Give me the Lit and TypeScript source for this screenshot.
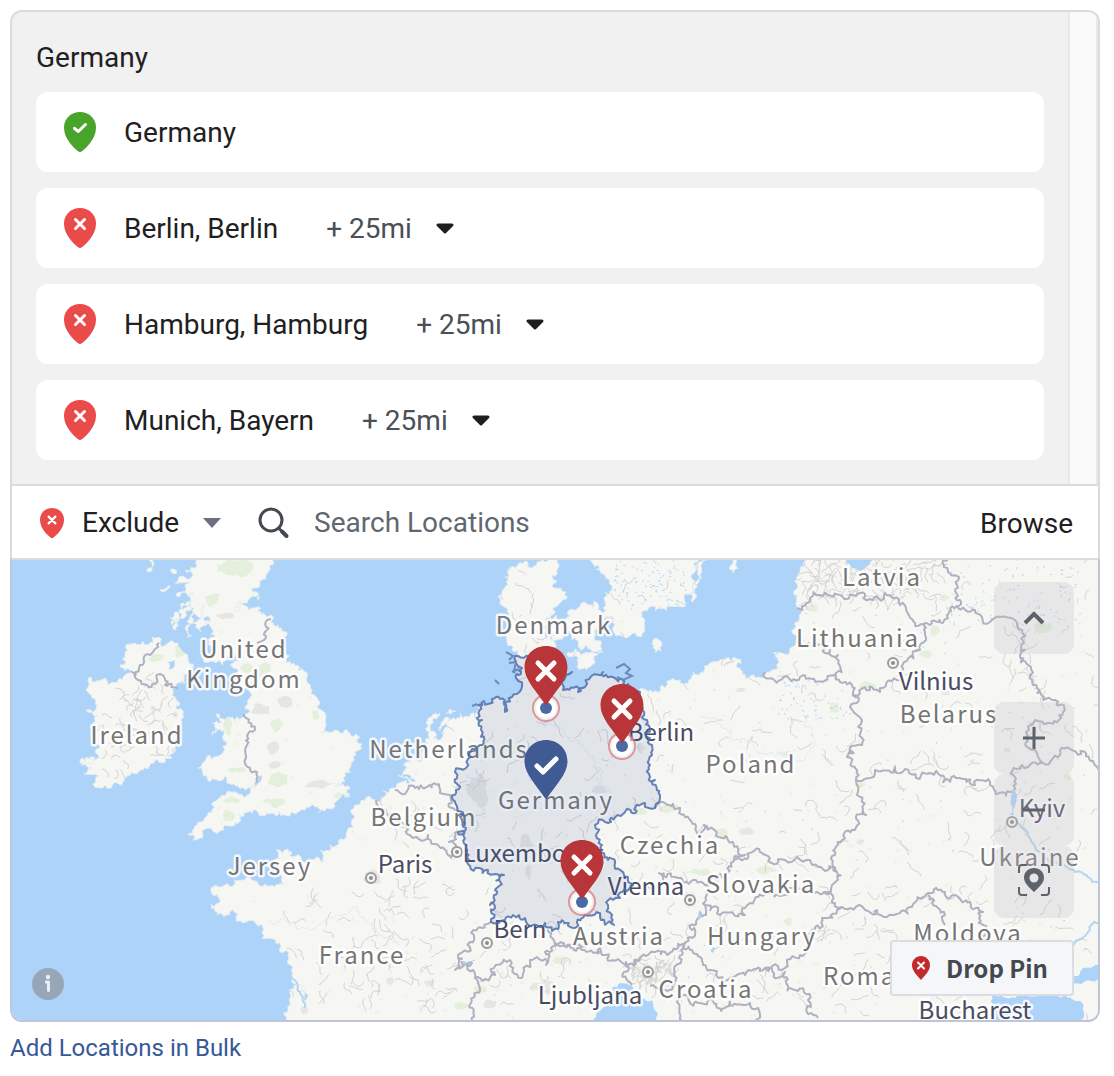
import { LitElement, html, svg, css } from "lit";
import { customElement, property, state } from "lit/decorators.js";

type Point = [number, number];

/* ---------- geometry helpers ---------- */

const parse = (text: string): Point[] =>
  text.trim().split(/\s+/).map((pair) => pair.split(",").map(Number) as Point);

function hash(a: number, b: number, c: number, d: number): number {
  const n = Math.sin(a * 12.9898 + b * 78.233 + c * 37.719 + d * 4.581) * 43758.5453;
  return n - Math.floor(n);
}

/* Breaks a straight edge into a natural looking one. The result depends only
   on the two ends, so neighbours that share an edge share its outline. */
function roughEdge(a: Point, b: Point, amount: number): Point[] {
  const length = Math.hypot(b[0] - a[0], b[1] - a[1]);
  if (length < 4) return [b];
  const h = hash(a[0] + b[0], a[1] + b[1], a[0] * b[0], a[1] * b[1]) - 0.5;
  const sign = a[0] < b[0] || (a[0] === b[0] && a[1] < b[1]) ? 1 : -1;
  const reach = h * amount * sign * Math.min(1, 10 / length);
  const mid: Point = [
    (a[0] + b[0]) / 2 - (b[1] - a[1]) * reach,
    (a[1] + b[1]) / 2 + (b[0] - a[0]) * reach,
  ];
  return [...roughEdge(a, mid, amount), ...roughEdge(mid, b, amount)];
}

function outline(text: string, closed: boolean, amount = 0.5): string {
  const points = parse(text);
  const all: Point[] = [points[0]];
  for (let i = 1; i < points.length; i++) all.push(...roughEdge(points[i - 1], points[i], amount));
  if (closed) all.push(...roughEdge(points[points.length - 1], points[0], amount));
  return "M" + all.map((p) => p[0].toFixed(1) + " " + p[1].toFixed(1)).join("L") + (closed ? "Z" : "");
}

/* ---------- map data ---------- */

const LAND = [
  // Great Britain
  "196,550 200,560 185,570 193,575 175,584 190,582 176,595 193,592 180,605 192,600 184,618 172,625 178,612 170,618 176,630 190,606 193,612 187,638 192,636 197,616 203,604 202,612 196,628 201,632 203,618 208,616 213,630 208,640 212,652 204,662 216,663 228,660 234,656 240,650 238,662 236,674 240,684 250,692 248,704 250,712 242,718 228,717 216,714 222,722 212,735 224,730 227,742 214,757 198,768 207,776 225,776 238,786 248,788 258,780 262,775 256,786 250,794 238,794 222,795 216,801 212,810 200,822 188,834 200,838 208,828 220,831 232,826 238,814 248,812 260,816 272,813 285,815 292,812 305,810 325,811 335,806 349,797 350,789 335,786 343,778 351,763 356,755 357,742 348,732 335,730 322,733 326,725 325,713 318,700 312,690 307,677 298,670 286,662 283,640 278,625 270,615 255,608 234,610 240,606 258,600 252,592 260,584 268,572 272,560 272,550",
  // Ireland
  "152,637 160,643 178,643 184,653 190,664 191,671 184,684 176,688 175,697 178,710 179,730 175,745 170,754 172,758 158,760 140,770 125,779 105,785 93,784 99,776 84,774 92,768 82,765 95,757 80,760 97,754 100,746 93,740 104,726 90,728 98,716 86,710 97,706 86,690 92,678 105,678 108,685 122,680 133,672 120,665 125,655 126,645 148,645",
  // Mainland
  "550,550 545,562 528,563 515,568 505,577 503,590 502,605 506,620 510,634 512,650 518,656 522,668 516,678 521,690 512,697 505,712 500,699 484,701 478,705 477,712 460,713 448,717 441,726 441,735 434,740 433,731 428,734 425,750 416,760 405,770 398,775 410,783 395,788 375,800 355,805 354,828 346,838 330,844 320,850 323,862 308,862 296,856 288,849 276,850 281,866 284,884 268,886 258,884 250,878 240,880 225,885 211,890 219,898 211,904 222,914 236,917 246,922 258,926 268,938 280,952 290,965 292,975 300,990 303,1000 294,985 290,1005 289,1040 1160,1040 1160,540 805,540 804,562 797,577 797,608 798,636 790,652 773,653 778,660 770,672 758,677 742,674 737,659 725,659 710,663 693,672 680,680 662,685 648,695 640,692 628,684 615,678 603,672 585,687 578,692 563,690 572,672 560,668 552,650 552,630 550,616 558,605 566,592 554,588 552,575 557,560 558,550",
  // Sweden, Danish islands, Öland, Gotland, Bornholm and small isles
  "596,550 598,565 606,578 612,590 604,598 603,608 611,622 616,636 630,636 642,634 645,620 641,612 652,606 670,606 682,607 684,598 692,586 697,562 698,550",
  "568,611 580,606 590,605 602,612 604,625 596,634 601,644 596,652 584,648 572,640 566,628",
  "546,618 556,615 565,624 563,636 550,636 545,628",
  "568,652 580,655 592,652 603,652 594,660 590,667 578,662 569,657",
  "704,554 707,560 700,574 692,602 690,594 698,570",
  "731,550 736,562 733,573 731,565",
  "653,640 662,645 661,651 653,648",
  "149,560 153,561 152,567 148,572",
  "171,569 176,570 174,574 171,572",
  "160,590 170,585 168,589 162,592",
  "430,732 426,723 432,716 440,713 434,718 430,726",
  "446,714 456,711 450,714",
  "410,780 402,776 406,774 416,781",
];

const WATER = [
  "845,550 846,562 852,569 860,571 868,566 873,560 873,550",
  "593,1030 597,1012 608,1004 618,998 612,988 620,983 632,986 630,996 635,1008 642,998 652,1000 657,1012 661,1030",
  "993,1030 992,996 1015,998 1040,995 1064,996 1080,1001 1083,1010 1079,1030",
  "1070,976 1080,974 1094,966 1104,970 1104,978 1084,982 1070,983",
  "436,733 442,726 449,718 447,726 443,736 437,740",
  "168,662 175,660 173,668 169,670",
  "462,962 474,959 475,961 464,965",
  "710,950 724,944 726,946 712,953",
  "698,918 701,910 702,916 699,920",
  "1011,790 1014,790 1014,815 1010,815",
];

const BORDERS = [
  "271,619 265,632 257,643",
  "243,714 255,730 247,736 247,745 246,758 250,768 257,772 257,782",
  "159,643 150,655 140,665 132,672 138,680 147,685 155,684 160,674 165,685 178,688",
  "395,790 405,794 415,788 427,787 440,789 450,795 455,810 463,815",
  "376,800 386,810 402,823 413,838 425,840 428,835 435,844 448,855 466,848",
  "458,832 449,842 455,848",
  "491,922 478,928 470,942 458,955 455,970 472,963 475,978 480,990 471,1003 478,1030",
  "475,978 495,975 510,960 522,978 530,960 546,965 545,952 558,945 575,944 590,940",
  "545,923 552,938 570,945 600,948 602,955 640,960 665,952 683,948 692,938 690,928 698,918 706,915 706,900 703,883",
  "633,885 660,885 659,873 675,877 693,880 703,883 705,885 728,873 734,860",
  "655,808 665,803 680,808 690,820 700,835 704,825 722,838 733,842 745,855 734,860 762,853 772,863 785,860 810,860 828,870 837,872",
  "706,905 720,915 745,915 750,903 780,896 790,888 810,892 824,892 832,885",
  "688,946 710,970 730,978 745,975 765,968 785,968 800,955 815,930 822,918 842,907",
  "640,960 626,962 624,972 632,985",
  "688,948 674,970 672,985 660,990 650,986",
  "765,968 785,972 795,990 808,1000 808,1014 818,1018",
  "680,1030 677,1002 700,1003 750,1003 758,1008 752,1030",
  "853,692 857,715 862,738 847,757 857,770 856,780 857,795 866,815 855,830 835,855 837,872 832,885 824,892 842,907 865,910 887,917 912,907 928,893 945,892 970,902 983,912 983,925 990,945",
  "928,895 938,908 945,925",
  "765,672 800,677 836,676 838,655 830,650 805,645",
  "836,676 852,685 853,692 880,692 897,680 904,662 920,650 926,640 923,624",
  "797,608 810,598 850,595 870,599 885,593 900,605 923,624 948,618 957,606 960,600 957,585 948,572 950,550",
  "957,606 975,610 990,622 1000,617 1015,620 1022,630 1020,655 1028,665 1033,685 1043,700 1055,700 1063,712 1050,723 1035,720 1029,730 1035,750 1043,763 1060,755 1085,752 1095,765 1104,790",
  "856,780 875,770 895,767 930,773 950,782 975,785 990,785 1012,792 1013,775 1022,765 1043,763",
];

const RIVERS = [
  "1012,820 1030,838 1036,850 1060,865 1075,872 1104,882",
  "1070,950 1090,930 1094,922 1104,926",
  "290,965 300,992 304,1008",
];

const STREAMS = [
  "700,715 730,735 780,752 800,760 815,740 806,720",
  "466,774 478,790 486,820",
  "270,920 310,930 360,912 400,945",
  "546,706 575,740 600,775 612,800",
];

const GERMANY =
  "478,705 482,720 480,745 470,757 455,772 458,785 453,800 463,815 465,823 458,832 466,848 470,866 488,870 504,875 495,890 490,905 491,922 505,920 513,915 525,918 545,923 552,931 558,922 570,927 600,917 614,925 612,915 608,905 620,898 633,885 628,877 608,860 602,845 596,835 595,825 605,822 625,812 645,803 655,808 660,795 655,780 650,765 652,745 645,733 647,720 642,704 640,692 628,684 615,678 603,672 585,687 578,692 563,690 572,672 548,664 530,657 518,656 522,668 516,678 521,690 512,697 505,712 500,699 484,701";

const ISLES =
  "M506 652L513 656L509 660M509 663L516 662L514 671L519 669M512 671L515 673M616 668L624 664L630 669L626 673L632 676L623 680L617 677M495 680L499 684M472 706L477 704";

const PARKS: [number, number, number, number][] = [
  [238, 568, 20, 11], [212, 600, 9, 8], [157, 658, 8, 5], [180, 650, 5, 7], [228, 725, 5, 12], [238, 770, 10, 3],
  [247, 668, 7, 6], [277, 725, 6, 9], [265, 672, 6, 10], [278, 780, 12, 7], [228, 816, 6, 6], [315, 715, 4, 6],
  [342, 796, 10, 4], [232, 800, 10, 3], [275, 802, 12, 5], [670, 808, 12, 4], [640, 812, 6, 4], [785, 754, 9, 4],
  [925, 654, 8, 5], [935, 630, 6, 5], [1043, 628, 9, 7], [868, 686, 9, 4], [834, 708, 6, 6], [944, 598, 5, 4],
  [480, 989, 8, 4], [462, 1006, 8, 4], [560, 960, 9, 4], [700, 872, 14, 4], [765, 870, 12, 4], [788, 922, 5, 4],
  [1068, 776, 5, 4], [860, 785, 6, 3], [812, 608, 7, 4], [505, 580, 3, 6], [636, 968, 6, 3], [722, 832, 6, 5],
];

const TOWNS: [number, number, number, number][] = [
  [225, 616, 10, 3], [260, 710, 11, 6], [285, 702, 8, 6], [273, 748, 6, 7], [318, 784, 16, 5], [275, 765, 7, 4],
  [372, 878, 11, 8], [430, 983, 6, 4], [304, 1010, 4, 4], [390, 981, 4, 4], [478, 790, 12, 16], [526, 845, 8, 11],
  [545, 987, 14, 7], [600, 790, 9, 5], [746, 832, 10, 5], [528, 872, 4, 8], [490, 1004, 8, 5], [610, 620, 6, 5],
  [945, 693, 5, 3], [1007, 750, 4, 3], [860, 842, 5, 3], [640, 748, 5, 5], [175, 715, 3, 4], [740, 690, 5, 3],
];

interface Place { name: string; x: number; y: number; city?: boolean }

const PLACES: Place[] = [
  { name: "Latvia", x: 882, y: 586 },
  { name: "Denmark", x: 554, y: 634 },
  { name: "United", x: 244, y: 658 },
  { name: "Kingdom", x: 244, y: 688 },
  { name: "Lithuania", x: 858, y: 647 },
  { name: "Vilnius", x: 936, y: 690, city: true },
  { name: "Belarus", x: 949, y: 723 },
  { name: "Ireland", x: 137, y: 744 },
  { name: "Berlin", x: 661, y: 741, city: true },
  { name: "Netherlands", x: 449, y: 758 },
  { name: "Poland", x: 751, y: 773 },
  { name: "Germany", x: 556, y: 809 },
  { name: "Kyiv", x: 1042, y: 817, city: true },
  { name: "Belgium", x: 424, y: 826 },
  { name: "Czechia", x: 670, y: 854 },
  { name: "Luxembourg", x: 533, y: 862, city: true },
  { name: "Ukraine", x: 1030, y: 866 },
  { name: "Paris", x: 405, y: 873, city: true },
  { name: "Jersey", x: 270, y: 875 },
  { name: "Vienna", x: 646, y: 895, city: true },
  { name: "Slovakia", x: 761, y: 893 },
  { name: "Bern", x: 520, y: 938, city: true },
  { name: "Austria", x: 619, y: 945 },
  { name: "Hungary", x: 762, y: 945 },
  { name: "Moldova", x: 968, y: 942 },
  { name: "France", x: 362, y: 964 },
  { name: "Romania", x: 880, y: 985 },
  { name: "Croatia", x: 706, y: 998 },
  { name: "Ljubljana", x: 590, y: 1004, city: true },
  { name: "Bucharest", x: 975, y: 1019, city: true },
];

const CAPITALS: Point[] = [[893, 663], [1012, 822], [457, 852], [371, 878], [690, 900], [487, 943], [648, 972]];

/* Short grey strokes of regional lines, and specks of lakes and villages. */
function scatter(): { lines: string; lakes: string; specks: string } {
  let seed = 7;
  const rnd = () => {
    seed = (seed * 16807) % 2147483647;
    return seed / 2147483647;
  };
  const stroke = (x: number, y: number, steps: number, stride: number) => {
    let angle = rnd() * Math.PI * 2;
    let d = `M${x.toFixed(1)} ${y.toFixed(1)}`;
    for (let i = 0; i < steps; i++) {
      angle += (rnd() - 0.5) * 2;
      d += `l${(Math.cos(angle) * stride).toFixed(1)} ${(Math.sin(angle) * stride).toFixed(1)}`;
    }
    return d;
  };
  let lines = "";
  let lakes = "";
  let specks = "";
  for (let i = 0; i < 460; i++) {
    const x = 380 + rnd() * 720;
    const y = 560 + rnd() * 460;
    lines += stroke(x, y, 3 + Math.floor(rnd() * 5), 3);
  }
  for (let i = 0; i < 60; i++) lines += stroke(100 + rnd() * 75, 680 + rnd() * 90, 4, 3);
  for (let i = 0; i < 60; i++) lines += stroke(270 + rnd() * 180, 880 + rnd() * 140, 5, 3);
  for (let i = 0; i < 110; i++) lines += stroke(800 + rnd() * 145, 560 + rnd() * 40, 5, 3);
  for (let i = 0; i < 50; i++) lines += stroke(630 + rnd() * 42, 958 + rnd() * 28, 4, 3);
  for (let i = 0; i < 100; i++) lakes += stroke(612 + rnd() * 75, 560 + rnd() * 48, 2, 1);
  for (let i = 0; i < 100; i++) lakes += stroke(950 + rnd() * 130, 565 + rnd() * 60, 2, 1);
  for (let i = 0; i < 60; i++) lakes += stroke(780 + rnd() * 70, 680 + rnd() * 40, 2, 1);
  for (let i = 0; i < 160; i++) lakes += stroke(480 + rnd() * 610, 600 + rnd() * 410, 2, 1);
  for (let i = 0; i < 400; i++) specks += stroke(200 + rnd() * 890, 620 + rnd() * 400, 2, 2);
  return { lines, lakes, specks };
}

const DETAIL = scatter();
const LAND_PATH = LAND.map((s) => outline(s, true, 1)).join("");
const WATER_PATH = WATER.map((s) => outline(s, true)).join("");
const BORDER_PATH = BORDERS.map((s) => outline(s, false, 1)).join("");
const RIVER_PATH = RIVERS.map((s) => outline(s, false)).join("");
const STREAM_PATH = STREAMS.map((s) => outline(s, false, 1)).join("");
const GERMANY_PATH = outline(GERMANY, true, 1);

function blob([x, y, rx, ry]: [number, number, number, number]): string {
  const pts: string[] = [];
  for (let i = 0; i < 9; i++) {
    const a = (i / 9) * Math.PI * 2;
    const r = 0.65 + hash(x, y, i, 3) * 0.5;
    pts.push(`${Math.round(x + Math.cos(a) * rx * r)},${Math.round(y + Math.sin(a) * ry * r)}`);
  }
  return outline(pts.join(" "), true);
}

const PARK_PATH = PARKS.map(blob).join("");
const TOWN_PATH = TOWNS.map(blob).join("");

/* ---------- icons ---------- */

@customElement("location-pin")
export class LocationPin extends LitElement {
  @property() kind: "include" | "exclude" = "exclude";
  static styles = css`
    :host { display: block; flex: none; width: 32px; height: 40px; }
    .icon { display: block; width: 100%; height: 100%; }
    .include { fill: #49a42c; }
    .exclude { fill: #e94b48; }
    .mark { fill: none; stroke: #fff; stroke-width: 3; stroke-linecap: round; stroke-linejoin: round; }
  `;
  render() {
    return html`<svg class="icon" viewBox="0 0 32 40" aria-hidden="true">
      <path class=${this.kind} d="M16 0C7 0 0 6.500 0 15.500C0 25 7 33.500 14 39.200Q16 40.800 18 39.200C25 33.500 32 25 32 15.500C32 6.500 25 0 16 0Z" />
      ${this.kind === "include"
        ? svg`<path class="mark" d="M10.500 16.300L14.300 19.500L21.500 12.500" />`
        : svg`<path class="mark" d="M11.500 11.500L20.500 20.500M20.500 11.500L11.500 20.500" />`}
    </svg>`;
  }
}

/* ---------- map ---------- */

@customElement("location-map")
export class LocationMap extends LitElement {
  static styles = css`
    :host { display: block; position: relative; overflow: hidden; border: 2px solid #bec5d6; border-top-color: #dadbe1; border-radius: 0 0 12px 12px; }
    .map { display: block; width: 100%; height: 460px; }
    .sea { fill: #add3f8; }
    .land { fill: #f6f7f3; stroke: #e4ecef; stroke-width: 1; }
    .park { fill: #e4efdc; }
    .town { fill: #e7e6e3; }
    .speck { fill: none; stroke: #efefec; stroke-width: 2; }
    .line { fill: none; stroke: #d3d3d3; stroke-width: 1; }
    .lake { fill: none; stroke: #add3f8; stroke-width: 1; }
    .river { fill: none; stroke: #b5d5f2; stroke-width: 2; }
    .stream { fill: none; stroke: #dfebf3; stroke-width: 1; }
    .border { fill: none; stroke: #b0b0c0; stroke-width: 2; stroke-linejoin: round; }
    .label { font-family: "Noto Sans CJK JP", "Noto Sans", sans-serif; font-size: 24px; text-anchor: middle; paint-order: stroke; stroke: #fff; stroke-opacity: 0.85; stroke-width: 5; stroke-linejoin: round; }
    .country { fill: #757575; letter-spacing: 2px; }
    .city { fill: #4a4c60; }
    .capital { fill: #f6f7f3; stroke: #9b9b9b; stroke-width: 2; }
    .capital-dot { fill: #8d8d8d; }
    .region { fill: #3b5998; fill-opacity: 0.11; stroke: #4f6dab; stroke-opacity: 0.85; stroke-width: 2; stroke-linejoin: round; }
    .isles { fill: none; stroke: #6c88bd; stroke-width: 2; }
    .halo { fill: #fff; fill-opacity: 0.5; stroke: #d9696b; stroke-opacity: 0.65; stroke-width: 2; }
    .ring { fill: #fff; }
    .dot { fill: #4a69a5; }
    .marker { fill: #b83639; }
    .marker.chosen { fill: #405a94; }
    .mark { fill: none; stroke: #fff; stroke-width: 5; stroke-linecap: round; stroke-linejoin: round; }
    .controls { position: absolute; right: 24px; top: 22px; bottom: 24px; display: flex; flex-direction: column; align-items: flex-end; }
    button { font-family: "Noto Sans CJK JP", "Noto Sans", sans-serif; border: 0; cursor: pointer; padding: 0; }
    .tool { display: grid; place-items: center; width: 80px; height: 72px; border-radius: 10px; background: rgba(190, 190, 195, 0.27); }
    .tool:first-child { margin-bottom: 48px; }
    .glyph { width: 36px; height: 36px; fill: none; stroke: #5d636d; stroke-width: 3; }
    .solid { fill: #5d636d; stroke: none; }
    .thick { stroke-width: 4; }
    .drop { display: flex; align-items: center; gap: 16px; height: 56px; margin-top: auto; padding: 0 24px 0 20px; border: 2px solid #dadde1; border-radius: 4px; background: #f5f6f8; color: #444950; font-size: 24px; font-weight: 700; line-height: 32px; }
    .drop-icon { width: 18px; height: 24px; }
    .drop-pin { fill: #c22a2d; }
    .drop-mark { fill: none; stroke: #fff; stroke-width: 2; stroke-linecap: round; }
    .info { position: absolute; left: 20px; bottom: 20px; width: 32px; height: 32px; border-radius: 50%; background: #98a7b8; }
    .info-icon { display: block; width: 32px; height: 32px; fill: #e6f1fc; }
  `;

  private pin(x: number, y: number, chosen = false) {
    return svg`<g transform="translate(${x} ${y})">
      <path class="marker ${chosen ? "chosen" : ""}" d="M0 0C-12 0 -21.500 9 -21.500 21.500C-21.500 34 -9 46 -1.500 57.500Q0 59.500 1.500 57.500C9 46 21.500 34 21.500 21.500C21.500 9 12 0 0 0Z" />
      <path class="mark" d=${chosen ? "M-9 26L-3 32L10 19" : "M-8 17L8 33M8 17L-8 33"} />
    </g>`;
  }

  private target(x: number, y: number) {
    return svg`<circle class="halo" cx=${x} cy=${y} r="13" /><circle class="ring" cx=${x} cy=${y} r="10" /><circle class="dot" cx=${x} cy=${y} r="6" />`;
  }

  render() {
    return html`
      <svg class="map" viewBox="12 560 1086 460" preserveAspectRatio="xMidYMid slice" role="img" aria-label="Map of targeted locations">
        <defs><clipPath id="land"><path d=${LAND_PATH} /></clipPath></defs>
        <rect class="sea" x="0" y="540" width="1120" height="500" />
        <path class="land" d=${LAND_PATH} />
        <g clip-path="url(#land)">
          <path class="speck" d=${DETAIL.specks} />
          <path class="town" d=${TOWN_PATH} />
          <path class="park" d=${PARK_PATH} />
          <path class="line" d=${DETAIL.lines} />
          <path class="lake" d=${DETAIL.lakes} />
          <path class="stream" d=${STREAM_PATH} />
          <path class="river" d=${RIVER_PATH} />
        </g>
        <path class="border" d=${BORDER_PATH} />
        <path class="sea" d=${WATER_PATH} />
        ${CAPITALS.map(([x, y]) => svg`<circle class="capital" cx=${x} cy=${y} r="5" /><circle class="capital-dot" cx=${x} cy=${y} r="2" />`)}
        ${PLACES.map((p) => svg`<text class="label ${p.city ? "city" : "country"}" x=${p.x} y=${p.y}>${p.name}</text>`)}
        <path class="region" d=${GERMANY_PATH} />
        <path class="isles" d=${ISLES} />
        ${this.target(546, 708)} ${this.target(622, 746)} ${this.target(582, 902)}
        ${this.pin(546, 646)} ${this.pin(622, 684)} ${this.pin(546, 740, true)} ${this.pin(582, 840)}
      </svg>
      <div class="controls">
        <button class="tool" aria-label="Collapse map">
          <svg class="glyph thick" viewBox="0 0 36 36"><path d="M9 23L18 14L27 23" /></svg>
        </button>
        <button class="tool" aria-label="Zoom in">
          <svg class="glyph" viewBox="0 0 36 36"><path d="M7 18H29M18 7V29" /></svg>
        </button>
        <button class="tool" aria-label="Zoom out">
          <svg class="glyph" viewBox="0 0 36 36"><path d="M7 18H29" /></svg>
        </button>
        <button class="tool" aria-label="Fit to locations">
          <svg class="glyph" viewBox="0 0 36 36">
            <path stroke-width="2" d="M3 9V4Q3 1 6 1H11M25 1H30Q33 1 33 4V9M33 23V28Q33 31 30 31H25M11 31H6Q3 31 3 28V23" />
            <path class="solid" fill-rule="evenodd" d="M18 4C12.500 4 8 8 8 13.500C8 19 13 23 18 28C23 23 28 19 28 13.500C28 8 23.500 4 18 4ZM18 9.500A4.500 4.500 0 1 1 18 18.500A4.500 4.500 0 1 1 18 9.500Z" />
          </svg>
        </button>
        <button class="drop">
          <svg class="drop-icon" viewBox="0 0 18 24" aria-hidden="true">
            <path class="drop-pin" d="M9 0C4 0 0 4 0 9C0 15 5 19 9 24C13 19 18 15 18 9C18 4 14 0 9 0Z" />
            <path class="drop-mark" d="M6 6.500L12 12.500M12 6.500L6 12.500" />
          </svg>
          Drop Pin
        </button>
      </div>
      <button class="info" aria-label="Map information">
        <svg class="info-icon" viewBox="0 0 32 32"><circle cx="16" cy="9" r="2.200" /><path d="M14 12.500H16.500Q18 12.500 18 14V22.500Q18 24 16.500 24Q15 24 15 22.500V15.500H14Q13 15.500 13 14Q13 12.500 14 12.500Z" /></svg>
      </button>
    `;
  }
}

/* ---------- page ---------- */

interface Row { name: string; kind: "include" | "exclude" }

@customElement("app-root")
export class AppRoot extends LitElement {
  @state() private rows: Row[] = [
    { name: "Germany", kind: "include" },
    { name: "Berlin, Berlin", kind: "exclude" },
    { name: "Hamburg, Hamburg", kind: "exclude" },
    { name: "Munich, Bayern", kind: "exclude" },
  ];

  static styles = css`
    :host { display: block; box-sizing: border-box; padding: 10px 14px 12px 10px; background: #fff; color: #1f2022; font-family: Roboto, sans-serif; font-size: 28px; line-height: 40px; }
    .list { display: flex; border: 2px solid #dadbe1; border-bottom: 0; border-radius: 12px 12px 0 0; background: #f1f1f1; overflow: hidden; }
    .group { flex: 1; min-width: 0; display: flex; flex-direction: column; gap: 14px; padding: 26px 24px 24px; }
    .track { width: 26px; border: solid #e8e8e8; border-width: 0 2px; background: #fafafa; }
    h2 { margin: 0; font-size: 28px; line-height: 40px; font-weight: 400; }
    ul { display: flex; flex-direction: column; gap: 16px; margin: 0; padding: 0; list-style: none; }
    .row { display: flex; align-items: center; height: 80px; padding: 0 28px; border-radius: 12px; background: #fff; }
    .name { margin-left: 28px; line-height: 42px; padding-top: 2px; }
    .pick { display: flex; align-items: center; gap: 24px; }
    .row .pick { margin-left: 48px; color: #4b4f56; }
    select, input, .browse { font: inherit; color: inherit; border: 0; padding: 0; margin: 0; background: none; outline-offset: 4px; }
    select { appearance: none; field-sizing: content; cursor: pointer; }
    .row select { padding-top: 2px; }
    .caret { flex: none; width: 18px; height: 12px; fill: #1c1e21; stroke: #1c1e21; stroke-width: 3; stroke-linejoin: round; pointer-events: none; }
    .bar { display: flex; align-items: center; height: 70px; padding: 2px 25px 0 28px; border: 2px solid #dadbe1; border-bottom: 0; background: #fff; }
    .bar location-pin { width: 24px; height: 30px; margin-right: 18px; }
    .bar .caret { fill: #6b7080; stroke: none; }
    .search { flex: 1; min-width: 0; display: flex; align-items: center; gap: 24px; margin-left: 37px; }
    .lens { flex: none; width: 32px; height: 32px; fill: none; stroke: #444950; stroke-width: 3; }
    .handle { stroke-width: 4; stroke-linecap: round; }
    input { flex: 1; min-width: 0; }
    input::placeholder { color: #606770; opacity: 1; }
    .browse { padding-top: 2px; cursor: pointer; }
    .bulk { display: inline-block; margin-top: 8px; color: #385898; font-size: 24px; line-height: 36px; text-decoration: none; }
  `;

  render() {
    return html`
      <section class="list">
        <div class="group">
          <h2>Germany</h2>
          <ul>
            ${this.rows.map(
              (row) => html`<li class="row">
                <location-pin .kind=${row.kind}></location-pin>
                <span class="name">${row.name}</span>
                ${row.kind === "exclude"
                  ? html`<label class="pick">
                      <select aria-label="Radius around ${row.name}"><option>+ 25mi</option></select>
                      <svg class="caret" viewBox="0 0 18 12" aria-hidden="true"><path d="M2 3H16L9 10Z" /></svg>
                    </label>`
                  : ""}
              </li>`
            )}
          </ul>
        </div>
        <div class="track"></div>
      </section>
      <div class="bar">
        <location-pin kind="exclude"></location-pin>
        <label class="pick">
          <select aria-label="Include or exclude">
            <option>Include</option>
            <option selected>Exclude</option>
          </select>
          <svg class="caret" viewBox="0 0 18 12" aria-hidden="true"><path d="M0 1H18L9 11Z" /></svg>
        </label>
        <label class="search">
          <svg class="lens" viewBox="0 0 32 32" aria-hidden="true">
            <circle cx="13" cy="13" r="11" /><path d="M20.500 21L24 24.500" /><path class="handle" d="M24 24.500L28.500 29" />
          </svg>
          <input type="search" placeholder="Search Locations" aria-label="Search Locations" />
        </label>
        <button class="browse">Browse</button>
      </div>
      <location-map></location-map>
      <a class="bulk" href="#bulk">Add Locations in Bulk</a>
    `;
  }
}
